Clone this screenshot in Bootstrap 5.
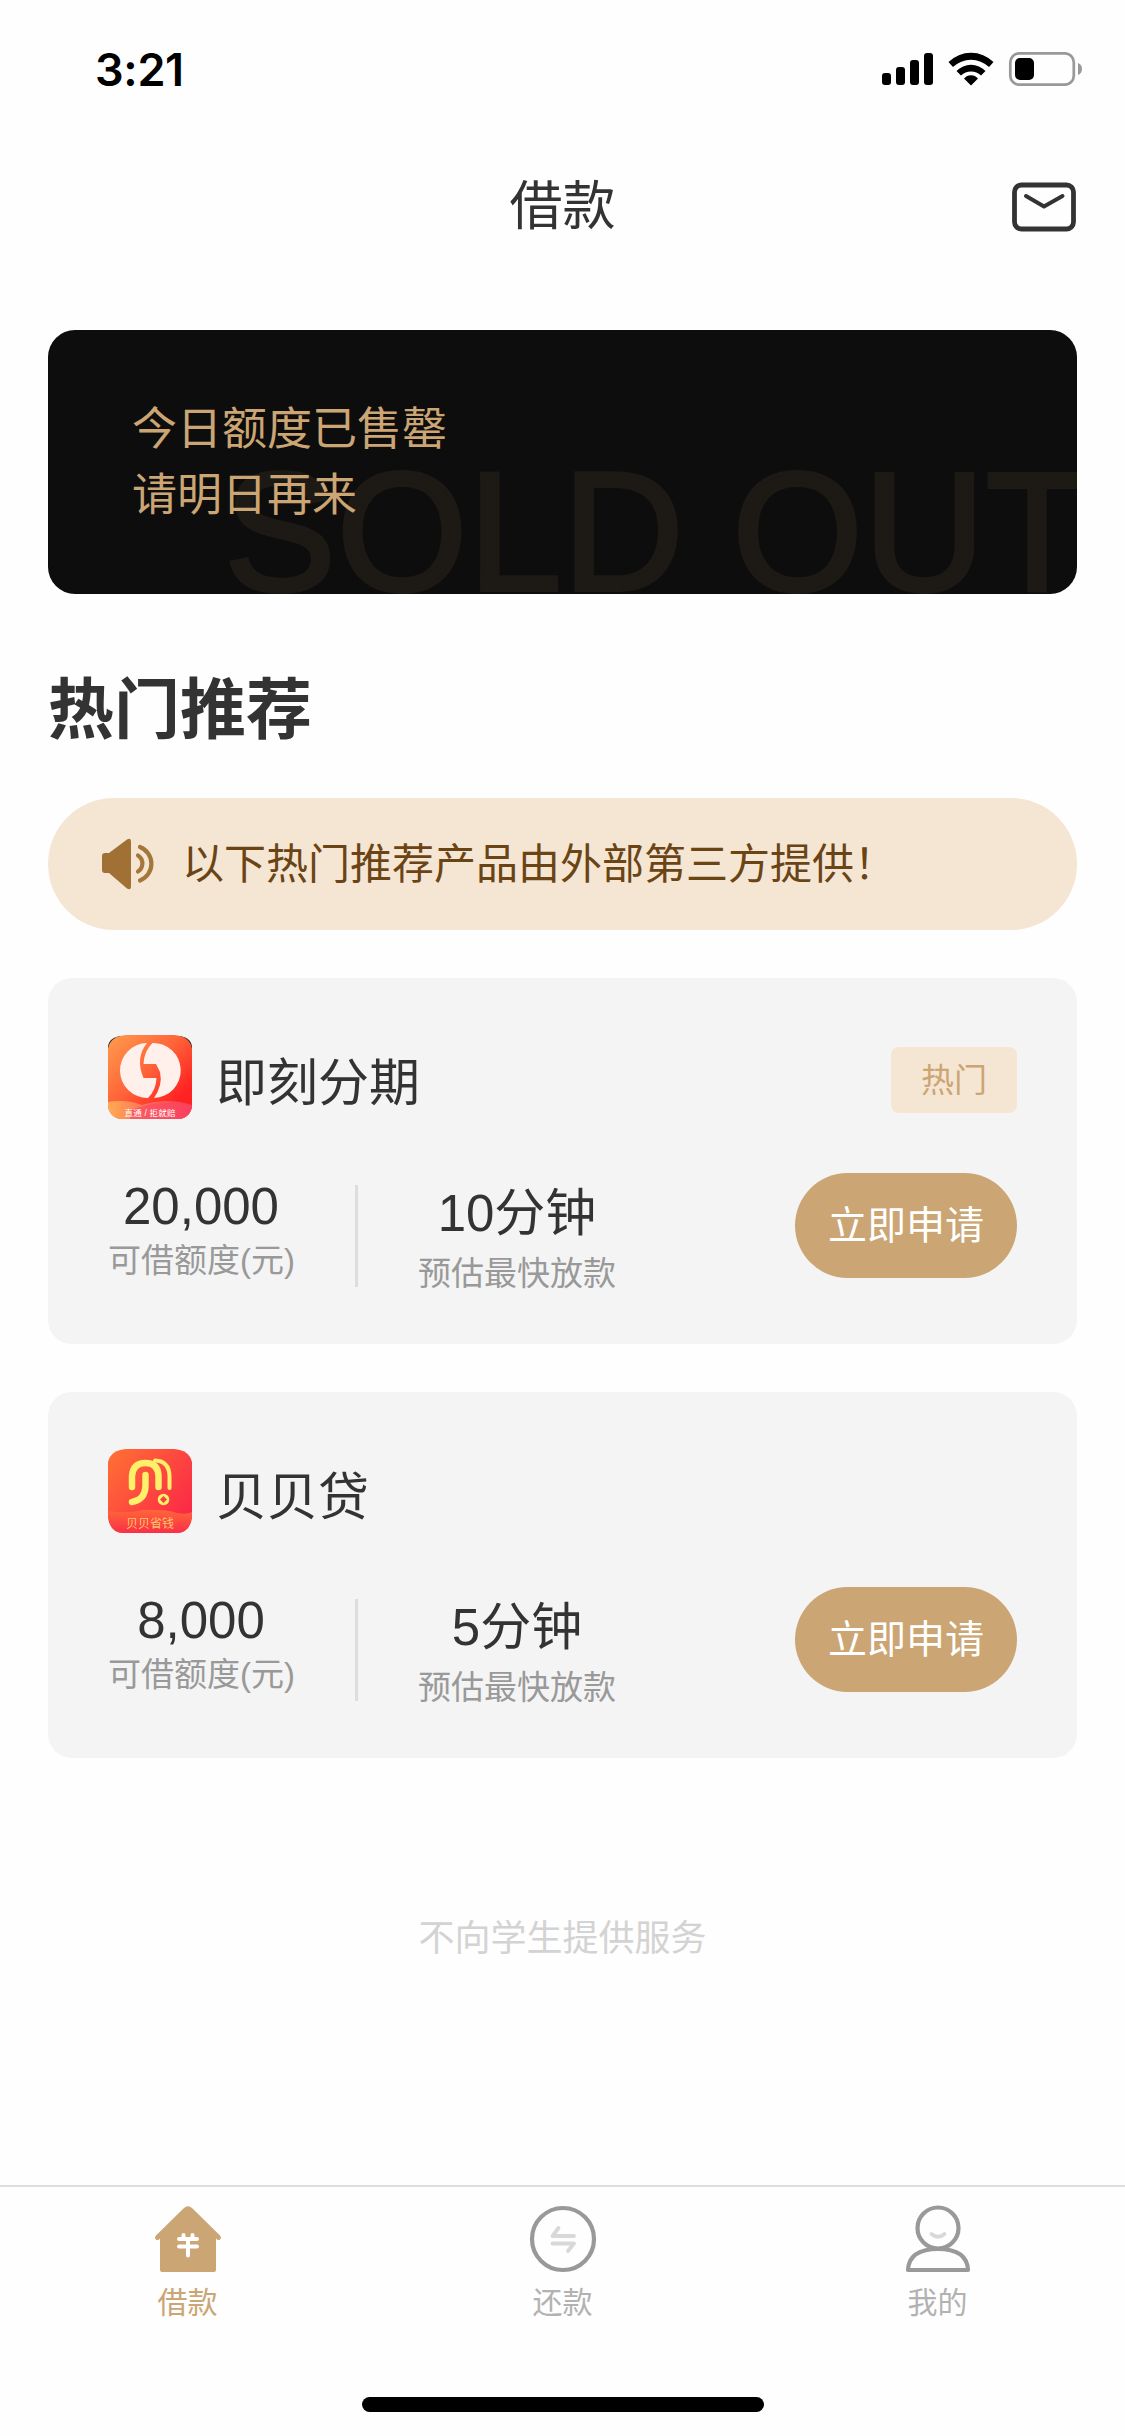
<!DOCTYPE html>
<html lang="zh-CN">
<head>
<meta charset="utf-8">
<meta name="viewport" content="width=device-width, initial-scale=1">
<title>借款</title>
<link rel="stylesheet" href="https://cdn.jsdelivr.net/npm/bootstrap@5.3.0/dist/css/bootstrap.min.css">
<style>
  body{font-family:"Liberation Sans","Noto Sans CJK SC",sans-serif;color:#333;background:#fefefe;line-height:1.2}
  svg{display:block;flex:none}
  .app{height:2436px;overflow:hidden}
  .status{height:138px;padding:0 43px 0 95px}
  .clock{font:600 45px/1 Inter,sans-serif;color:#000;letter-spacing:-.3px}
  .topbar{height:138px;padding:0 48px}
  .topbar h1{font-size:53px;line-height:66px;font-weight:400}
  .side{width:65px}
  .main{padding:54px 48px 0}
  .soldout{height:264px;border-radius:27px;background:#0d0d0d;color:#cba573;padding:67px 84px;font-size:45px;line-height:66px}
  .ghost{right:-24px;bottom:-38px;font-size:168px;line-height:200px;color:#1d1915;-webkit-text-stroke:4px #1d1915;white-space:nowrap;left:176px;letter-spacing:.8px}
  .hot{font-size:66px;line-height:80px;font-weight:700;margin:76px 0 48px}
  .notice{height:132px;background:#f5e6d3;color:#6b4415;font-size:42px;padding:0 54px;gap:28px}
  .notice span{padding-top:3px}
  .loan{height:366px;background:#f4f4f4;border-radius:24px;margin-top:48px;padding:57px 60px 0}
  .loan-head{height:84px}
  .loan-name{font-size:51px;line-height:60px;margin-left:24px;padding-top:13px}
  .tag{width:126px;height:66px;border-radius:8px;background:#f5e6d3;color:#cba573;font-size:33px;margin-top:6px;padding-top:2px}
  .loan-body{margin-top:54px}
  .stat{line-height:1}
  .num{font-size:51px;line-height:60px}
  .cap{font-size:33px;line-height:40px;color:#999;white-space:nowrap}
  .stat-a{width:186px;padding-top:4px}
  .stat-a .cap{margin-top:4px}
  .stat-b{width:198px;margin-left:60px;padding-top:11px}
  .stat-b .cap{margin-top:10px}
  .rule{width:3px;height:102px;background:#ddd;margin:12px 0 0 61px}
  .apply{width:222px;height:105px;border-radius:53px;background:#cba573;color:#fff;font-size:39px;border:0;padding:2px 0 0}
  .remark{font-size:36px;line-height:44px;color:#d3d3d3;margin-top:159px}
  .tabs{height:251px;border-top:2px solid #dedede}
  .tab{font-size:30px;line-height:36px;color:#b2b2b2;padding-top:17px}
  .tab.on{color:#cba573}
  .tab svg{margin-bottom:11px}
  .home{width:402px;height:15px;border-radius:8px;background:#000;margin-bottom:24px}
</style>
</head>
<body>
<div class="app d-flex flex-column">
  <header>
    <div class="status d-flex align-items-center justify-content-between">
      <span class="clock">3:21</span>
      <svg width="200" height="34" viewBox="0 0 200 34">
        <rect x="0" y="21" width="9" height="12" rx="3"/><rect x="14" y="15" width="9" height="18" rx="3"/><rect x="28" y="8" width="9" height="25" rx="3"/><rect x="42" y="1" width="9" height="32" rx="3"/>
        <path d="M66.500 10A32 32 0 0 1 111.500 10L107 15A26 26 0 0 0 71 15ZM74.500 19A20 20 0 0 1 103.500 19L99 23.500A14.500 14.500 0 0 0 79 23.500ZM82 26.500A9 9 0 0 1 96 26.500L89 33.500Z"/>
        <rect x="128.300" y="1.300" width="63.500" height="31.400" rx="9" fill="none" stroke="#999" stroke-width="2.700"/>
        <rect x="133" y="6" width="19" height="22" rx="5"/><path d="M196 11Q200 12.500 200 17T196 23Z" fill="#999"/>
      </svg>
    </div>
    <div class="topbar d-flex align-items-center justify-content-between">
      <span class="side"></span>
      <h1 class="m-0">借款</h1>
      <svg class="side" width="65" height="50" viewBox="0 0 65 50" fill="none" stroke="#333" stroke-linecap="round" stroke-linejoin="round"><rect x="2.500" y="3" width="59" height="44" rx="7" stroke-width="4.800"/><path d="M14 14L32 24.500L50.500 14" stroke-width="4"/></svg>
    </div>
  </header>

  <main class="main flex-grow-1">
    <section class="soldout position-relative overflow-hidden">
      <div class="ghost position-absolute">SOLD OUT</div>
      <div class="position-relative">今日额度已售罄<br>请明日再来</div>
    </section>
    <h2 class="hot">热门推荐</h2>
    <div class="notice rounded-pill d-flex align-items-center">
      <svg width="52" height="52" viewBox="0 0 52 52"><path d="M0 18Q0 15 3 15H7L25 1.500Q29-1 29 4V48Q29 53 25 50.500L7 35H3Q0 35 0 32Z" fill="#a07035"/><path d="M36 17.500A9.500 9.500 0 0 1 36 33.500M38 9A18 18 0 0 1 38 42.500" fill="none" stroke="#a4763c" stroke-width="4.200" stroke-linecap="round"/></svg>
      <span>以下热门推荐产品由外部第三方提供！</span>
    </div>

    <article class="loan">
      <div class="loan-head d-flex align-items-center">
        <svg width="84" height="84" viewBox="0 0 84 84">
          <defs>
            <linearGradient id="g1" x1="0" y1="0" x2="1" y2="1"><stop offset="0" stop-color="#ff9d4d"/><stop offset=".45" stop-color="#ff6238"/><stop offset=".8" stop-color="#ff2222"/></linearGradient>
            <linearGradient id="g2" x1="0" y1="0" x2="1" y2="0"><stop offset="0" stop-color="#ffac50"/><stop offset=".5" stop-color="#fd695a"/><stop offset="1" stop-color="#f93552"/></linearGradient>
            <clipPath id="c1"><rect width="84" height="84" rx="14"/></clipPath>
          </defs>
          <path d="M0 13Q0 3 12 1H72Q84 3 84 13V24H0Z" fill="#222"/>
          <g clip-path="url(#c1)"><path d="M0 13Q3 1 18 0H66Q81 1 84 13V84H0Z" fill="url(#g1)"/>
          <path d="M0 67Q19 64 34 70Q60 62 84 70V84H0Z" fill="url(#g2)"/><path d="M22 76Q45 64 84 70V84H22Z" fill="#fb4764" opacity=".65"/></g>
          <path d="M39 8A27.500 27.500 0 0 0 40 63Q48 55 48.500 43H35.500Q27 23 39 8Z" fill="#fff0eb"/><path d="M44.500 8A27.500 27.500 0 0 1 46 63Q55 50 52 37L48 29H35.500Q36 16 44.500 8Z" fill="#fff0eb"/>
          <text x="42" y="80.500" text-anchor="middle" font-size="8.500" fill="#fff" textLength="51">直通 / 拒就赔</text>
        </svg>
        <div class="loan-name">即刻分期</div>
        <span class="tag ms-auto d-flex align-items-center justify-content-center">热门</span>
      </div>
      <div class="loan-body d-flex align-items-start">
        <div class="stat stat-a text-center"><div class="num">20,000</div><div class="cap">可借额度(元)</div></div>
        <div class="rule"></div>
        <div class="stat stat-b text-center"><div class="num">10分钟</div><div class="cap">预估最快放款</div></div>
        <button class="apply btn ms-auto" type="button">立即申请</button>
      </div>
    </article>

    <article class="loan">
      <div class="loan-head d-flex align-items-center">
        <svg width="84" height="84" viewBox="0 0 84 84">
          <defs>
            <linearGradient id="g3" x1="0" y1="0" x2="1" y2=".8"><stop offset="0" stop-color="#ff7233"/><stop offset="1" stop-color="#fb2548"/></linearGradient>
            <linearGradient id="g4" x1="0" y1="0" x2="0" y2="1"><stop offset="0" stop-color="#ff6639"/><stop offset="1" stop-color="#fb2e48"/></linearGradient>
            <clipPath id="c2"><path d="M0 13Q3 1 18 0H66Q81 1 84 13V68Q82 84 68 84H16Q2 84 0 68Z"/></clipPath>
          </defs>
          <g clip-path="url(#c2)"><rect width="84" height="84" fill="url(#g3)"/><path d="M0 62Q20 65 35 61Q57 60 69 64Q79 66 84 63V84H0Z" fill="url(#g4)"/></g>
          <g fill="none" stroke="#fff06b" stroke-width="6.500" stroke-linecap="round"><path d="M24 38V27Q25 14 37.500 14Q50 14 50.500 27V38"/><path d="M37.500 26V37Q37 51 24 53"/><path d="M47 11.500Q61 12 61.500 27V39" stroke-width="4"/></g>
          <circle cx="55.500" cy="50.500" r="5.800" fill="#fff06b"/><path d="M55.500 47L59 50.500L55.500 54L52 50.500Z" fill="#f4433d"/>
          <text x="42" y="79" text-anchor="middle" font-size="12" fill="#ffc568">贝贝省钱</text>
        </svg>
        <div class="loan-name">贝贝贷</div>
      </div>
      <div class="loan-body d-flex align-items-start">
        <div class="stat stat-a text-center"><div class="num">8,000</div><div class="cap">可借额度(元)</div></div>
        <div class="rule"></div>
        <div class="stat stat-b text-center"><div class="num">5分钟</div><div class="cap">预估最快放款</div></div>
        <button class="apply btn ms-auto" type="button">立即申请</button>
      </div>
    </article>
    <p class="remark text-center mb-0">不向学生提供服务</p>
  </main>

  <footer class="tabs d-flex flex-column justify-content-between align-items-center">
    <nav class="row g-0 w-100">
      <div class="tab on col d-flex flex-column align-items-center">
        <svg width="70" height="70" viewBox="0 0 70 70"><path d="M31 4Q35 .5 39 4L67 31.500Q69 34 67 35.500T63 34.500V66Q63 68 61 68H9Q7 68 7 66V34.500Q5 37 3 35.500T3 31.500Z" fill="#cba573"/><path d="M30.500 31V35M39.500 31V35M26 35H44M26 42.500H44M35 36V51.500" fill="none" stroke="#fff" stroke-width="4" stroke-linecap="round"/></svg>
        <span>借款</span>
      </div>
      <div class="tab col d-flex flex-column align-items-center">
        <svg width="70" height="70" viewBox="0 0 70 70" fill="none" stroke-linecap="round" stroke-linejoin="round"><circle cx="35" cy="35" r="31" stroke="#999" stroke-width="4.200"/><path d="M30.500 24L24.500 32H46M24.500 39.500H46L40 47" stroke="#d8d8d8" stroke-width="3.800"/></svg>
        <span>还款</span>
      </div>
      <div class="tab col d-flex flex-column align-items-center">
        <svg width="70" height="70" viewBox="0 0 70 70" fill="none" stroke="#999" stroke-width="4.200" stroke-linejoin="round"><circle cx="35" cy="24" r="20.500"/><path d="M5 66Q6 45 35 45T65 66Z"/><path d="M28.500 30Q35 35.500 41.500 30" stroke="#d8d8d8" stroke-width="3.800" stroke-linecap="round"/></svg>
        <span>我的</span>
      </div>
    </nav>
    <div class="home"></div>
  </footer>
</div>
<script src="https://cdn.jsdelivr.net/npm/bootstrap@5.3.0/dist/js/bootstrap.bundle.min.js"></script>
</body>
</html>
